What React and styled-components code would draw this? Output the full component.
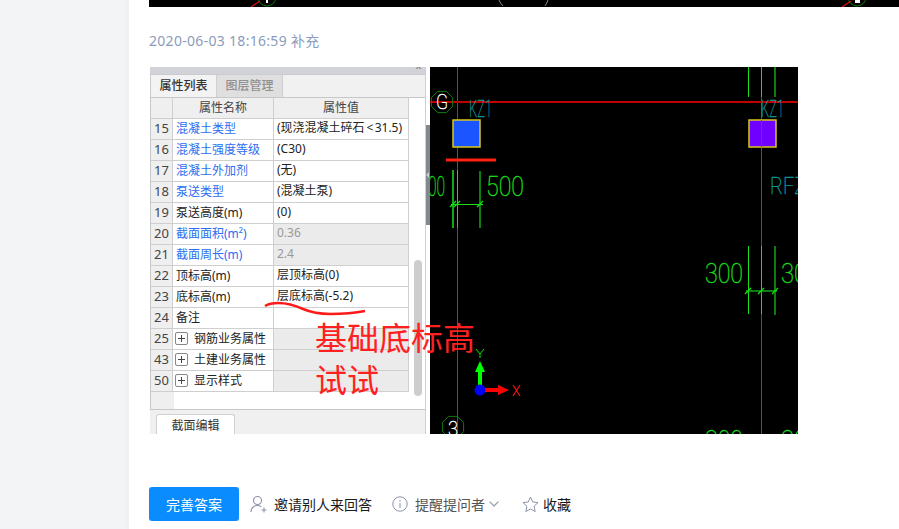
import React from "react";
import styled, { createGlobalStyle } from "styled-components";

const Global = createGlobalStyle`
  html, body { margin: 0; padding: 0; background: #fff; }
  body { font-family: "Noto Sans", "Noto Sans CJK SC", sans-serif; overflow: hidden; }
`;

const Page = styled.div`
  display: flex;
  width: 899px;
  height: 529px;
  overflow: hidden;
`;
const Sidebar = styled.aside`
  width: 129px;
  flex: none;
  background: #f3f4f6;
  box-shadow: inset -4px 0 4px -3px #ebecef;
`;
const Main = styled.main`
  flex: 1;
  min-width: 0;
  padding-left: 20px;
  background: #fff;
  display: flex;
  flex-direction: column;
`;
const TopPicture = styled.svg`
  display: block;
  width: 750px;
  height: 7px;
  flex: none;
`;
const Meta = styled.div`
  margin-top: 26px;
  height: 16px;
  line-height: 16px;
  font-size: 14px;
  letter-spacing: 0.3px;
  color: #8c9bbc;
`;
const Figure = styled.figure`
  position: relative;
  margin: 18px 0 0 1px;
  width: 648px;
  height: 367px;
  display: flex;
  flex: none;
`;
const Panel = styled.div`
  width: 276px;
  height: 367px;
  flex: none;
  background: #f0f0f0;
  box-sizing: border-box;
  border-right: 1px solid #cfd0d3;
  display: flex;
  flex-direction: column;
  font-family: "Noto Sans", "Noto Sans CJK SC", sans-serif;
  font-size: 12px;
  color: #222;
  overflow: hidden;
`;
const TitleBar = styled.div`
  height: 7px;
  flex: none;
  background: #d1d3d8;
  position: relative;
  &::after {
    content: "x";
    position: absolute;
    right: 4px;
    top: -7px;
    font: 10px/12px "Liberation Sans", sans-serif;
    color: #666;
  }
`;
const TabRow = styled.div`
  display: flex;
  height: 23px;
  flex: none;
  box-sizing: border-box;
  border: 1px solid #c9cbce;
  border-right: 0;
  border-bottom: 0;
  background: #f1f1f1;
`;
const Tab = styled.div`
  width: 65px;
  text-align: center;
  line-height: 21px;
  font-weight: 500;
  color: ${p => (p.$active ? "#333" : "#919191")};
  background: ${p => (p.$active ? "#f3f3f3" : "#dfdfdf")};
  border-right: 1px solid #cfcfcf;
`;
const Body = styled.div`
  display: flex;
  height: 313px;
  flex: none;
  background: #fff;
  border: 1px solid #c6c7c9;
  border-right: 0;
  box-sizing: border-box;
`;
const TableWrap = styled.div`
  width: 258px;
  flex: none;
  display: flex;
  flex-direction: column;
`;
const Rows = styled.div`
  display: grid;
  grid-template-columns: 22px 101px 135px;
  grid-auto-rows: 21px;
`;
const Head = styled.div`
  background: #efefef;
  border-right: 1px solid #cfcfcf;
  border-bottom: 1px solid #cfcfcf;
  box-sizing: border-box;
  text-align: center;
  line-height: 20px;
  color: #444;
`;
const Num = styled.div`
  background: #efefef;
  border-right: 1px solid #cfcfcf;
  border-bottom: 1px solid #cfcfcf;
  box-sizing: border-box;
  text-align: center;
  line-height: 19px;
  color: #444;
  font-size: 13px;
`;
const Name = styled.div`
  background: #fff;
  border-right: 1px solid #cfcfcf;
  border-bottom: 1px solid #cfcfcf;
  box-sizing: border-box;
  padding: 0 0 2px 3px;
  white-space: nowrap;
  color: ${p => (p.$link ? "#2d6df0" : "#222")};
  display: flex;
  align-items: center;
`;
const Value = styled.div`
  background: ${p => (p.$off ? "#ebebeb" : "#fff")};
  border-right: 1px solid #cfcfcf;
  border-bottom: 1px solid #cfcfcf;
  box-sizing: border-box;
  line-height: 18px;
  padding-left: 3px;
  white-space: nowrap;
  overflow: hidden;
  color: ${p => (p.$dim ? "#999" : "#222")};
`;
const Filler = styled.div`
  flex: 1;
  margin-right: 235px;
  background: #efefef;
`;
const Expand = styled.span`
  width: 13px;
  height: 13px;
  box-sizing: border-box;
  border: 1px solid #888;
  border-radius: 2px;
  margin: 1px 6px 0 -1px;
  flex: none;
  position: relative;
  &::before, &::after {
    content: "";
    position: absolute;
    background: #444;
  }
  &::before { left: 2px; right: 2px; top: 5px; height: 1px; }
  &::after { top: 2px; bottom: 2px; left: 5px; width: 1px; }
`;
const Scroll = styled.div`
  flex: 1;
  position: relative;
`;
const Thumb = styled.div`
  position: absolute;
  left: 5px;
  top: 162px;
  width: 8px;
  height: 136px;
  border-radius: 4px;
  background: #cdcdcd;
`;
const BottomTabs = styled.div`
  flex: 1;
  padding: 4px 0 0 6px;
  display: flex;
  align-items: flex-end;
`;
const BottomTab = styled.div`
  width: 79px;
  height: 20px;
  box-sizing: border-box;
  background: #fff;
  border: 1px solid #d0d0d0;
  border-bottom: 0;
  border-radius: 3px 3px 0 0;
  text-align: center;
  line-height: 21px;
  color: #333;
`;
const Splitter = styled.div`
  width: 4px;
  flex: none;
  display: flex;
  align-items: flex-start;
  position: relative;
  background: #fff;
  &::before {
    content: "";
    width: 4px;
    height: 100px;
    margin-top: 58px;
    background: #808890;
  }
  &::after {
    content: "";
    position: absolute;
    left: 0;
    top: 105px;
    border: 3px solid transparent;
    border-left: 0;
    border-right: 3px solid #c8cacd;
  }
`;
const Cad = styled.svg`
  display: block;
  width: 368px;
  height: 367px;
  flex: none;
  background: #000;
`;
const Scribble = styled.svg`
  position: absolute;
  left: 0;
  top: 0;
  width: 648px;
  height: 367px;
  pointer-events: none;
`;
const Note = styled.div`
  position: absolute;
  left: 165px;
  top: 248px;
  font-family: "Noto Sans CJK SC", sans-serif;
  font-size: 32px;
  line-height: 42px;
  color: #ff2020;
  white-space: nowrap;
`;
const Actions = styled.div`
  margin-top: 53px;
  height: 34px;
  display: flex;
  align-items: center;
  font-family: "Noto Sans CJK SC", sans-serif;
  font-size: 14px;
`;
const Primary = styled.button`
  width: 90px;
  height: 34px;
  border: 0;
  border-radius: 3px;
  background: #0a8cff;
  color: #fff;
  font: inherit;
  padding: 0;
  margin-right: 11px;
`;
const Action = styled.span`
  display: inline-flex;
  align-items: center;
  gap: ${p => p.$gap}px;
  margin-right: ${p => p.$after}px;
  color: ${p => p.$color || "#1a1a1a"};
  svg { flex: none; }
`;
const ChevronMark = styled.svg`
  margin-left: -3px;
`;

const rows = [
  ["15", "混凝土类型", "(现浇混凝土碎石\u2009<\u200a31.5)", 1],
  ["16", "混凝土强度等级", "(C30)", 1],
  ["17", "混凝土外加剂", "(无)", 1],
  ["18", "泵送类型", "(混凝土泵)", 1],
  ["19", "泵送高度(m)", "(0)", 0],
  ["20", "截面面积(m²)", "0.36", 1, 1],
  ["21", "截面周长(m)", "2.4", 1, 1],
  ["22", "顶标高(m)", "层顶标高(0)", 0],
  ["23", "底标高(m)", "层底标高(-5.2)", 0],
  ["24", "备注", "", 0],
  ["25", "钢筋业务属性", "", 0, 2],
  ["43", "土建业务属性", "", 0, 2],
  ["50", "显示样式", "", 0, 2],
];

const G1 = "#18e018";
const G2 = "#10a810";
const TEAL = "#0c9a9f";
const hex = (cx, cy, r) =>
  Array.from({ length: 8 }, (_, i) => {
    const a = (Math.PI / 4) * i + Math.PI / 8;
    return `${(cx + r * Math.cos(a)).toFixed(1)},${(cy + r * Math.sin(a)).toFixed(1)}`;
  }).join(" ");

const CadText = ({ x, y, w, size, fill, children }) => (
  <text x={x} y={y} textLength={w} lengthAdjust="spacingAndGlyphs" fontFamily="Roboto, sans-serif" fontSize={size} fontWeight="100" fill={fill} stroke={fill} strokeWidth="0.4">
    {children}
  </text>
);

const DimTick = ({ x, y, color }) => (
  <path d={`M${x - 3} ${y + 3}L${x + 3} ${y - 3}`} stroke={color} strokeWidth="1.2" />
);

const CadDrawing = () => (
  <Cad viewBox="430 67 368 367">
    <line x1="457.5" y1="67" x2="457.5" y2="434" stroke="#f01010" />
    <line x1="761.5" y1="97" x2="761.5" y2="434" stroke="#f01010" />
    <line x1="430" y1="102" x2="798" y2="102" stroke="#c00000" strokeWidth="2" />

    <polygon points={hex(442, 102, 11.5)} fill="none" stroke="#0e7a0e" />
    <CadText x="436" y="109" w="12" size="20" fill="#fff">G</CadText>
    <CadText x="469" y="117" w="23" size="23" fill={TEAL}>KZ1</CadText>
    <rect x="453" y="120" width="27" height="27" fill="#1a55ff" stroke="#d8c81a" strokeWidth="1.5" />

    <CadText x="428" y="196" w="17" size="28" fill={G1}>00</CadText>
    <CadText x="486" y="196" w="38" size="28" fill={G1}>500</CadText>
    <line x1="453" y1="170" x2="453" y2="228" stroke={G1} strokeWidth="1.5" />
    <line x1="457.5" y1="170" x2="457.5" y2="228" stroke={G1} />
    <line x1="480" y1="171" x2="480" y2="228" stroke={G2} strokeWidth="1.5" />
    <line x1="451" y1="204.5" x2="483" y2="204.5" stroke={G1} />
    <DimTick x={453} y={204} color={G1} />
    <DimTick x={457} y={204} color={G1} />
    <DimTick x={480} y={204} color={G1} />

    <line x1="748.5" y1="67" x2="748.5" y2="97" stroke={G1} />
    <line x1="761.5" y1="67" x2="761.5" y2="97" stroke={G1} />
    <line x1="775" y1="67" x2="775" y2="97" stroke={G2} strokeWidth="1.5" />
    <CadText x="761" y="117" w="23" size="23" fill={TEAL}>KZ1</CadText>
    <rect x="749" y="120" width="27" height="27" fill="#7000ff" stroke="#d8c81a" strokeWidth="1.5" />
    <line x1="761.5" y1="120" x2="761.5" y2="147" stroke="#f01010" />
    <CadText x="770" y="194" w="36" size="23" fill={TEAL}>RFZ</CadText>

    <CadText x="705" y="283" w="38" size="28" fill={G1}>300</CadText>
    <CadText x="781" y="283" w="26" size="28" fill={G1}>30</CadText>
    <line x1="748.5" y1="246" x2="748.5" y2="314" stroke={G1} />
    <line x1="761.5" y1="246" x2="761.5" y2="314" stroke={G1} />
    <line x1="775" y1="246" x2="775" y2="315" stroke={G2} strokeWidth="1.5" />
    <line x1="746" y1="291" x2="777" y2="291" stroke={G2} strokeWidth="1.5" />
    <DimTick x={748} y={291} color={G1} />
    <DimTick x={761} y={291} color={G1} />
    <DimTick x={775} y={291} color={G1} />

    <line x1="480" y1="390" x2="480" y2="370" stroke="#00ff00" strokeWidth="4" />
    <polygon points="480,361 485,372 475,372" fill="#00ff00" />
    <path d="M476 349L480 354L484 349M480 354V358" fill="none" stroke="#00e000" />
    <line x1="480" y1="390" x2="500" y2="390" stroke="#ff0000" strokeWidth="4" />
    <polygon points="509,390 498,385 498,395" fill="#ff0000" />
    <path d="M513 385L520 396M520 385L513 396" fill="none" stroke="#ff1010" strokeWidth="1.2" />
    <circle cx="480" cy="390" r="5.5" fill="#0000ff" />

    <polygon points={hex(453, 427, 11.5)} fill="none" stroke="#0e7a0e" />
    <CadText x="448" y="436" w="10" size="20" fill="#fff">3</CadText>
    <CadText x="705" y="450" w="38" size="28" fill={G1}>300</CadText>
    <CadText x="781" y="450" w="26" size="28" fill={G1}>30</CadText>
  </Cad>
);

const TopDrawing = () => (
  <TopPicture viewBox="149 0 750 7">
    <rect x="149" y="0" width="750" height="7" fill="#000" />
    <line x1="251" y1="7" x2="260" y2="1" stroke="#d01010" strokeWidth="1.4" />
    <circle cx="267" cy="-3" r="9" fill="none" stroke="#0e7a0e" />
    <rect x="266" y="0" width="2" height="3" fill="#fff" />
    <path d="M499 0Q500 3 503 6M548 0Q547 3 545 6" fill="none" stroke="#888" />
    <line x1="842" y1="7" x2="851" y2="1" stroke="#d01010" strokeWidth="1.4" />
    <circle cx="857" cy="-3" r="9" fill="none" stroke="#0e7a0e" />
    <rect x="855" y="0" width="5" height="3" fill="#fff" />
  </TopPicture>
);

const UserIcon = () => (
  <svg width="17" height="18" viewBox="0 0 17 18" fill="none" stroke="#8b93a7" strokeWidth="1.1">
    <circle cx="7.5" cy="5.5" r="4" />
    <path d="M1 17c0-4 3-6.5 6.5-6.5 1.5 0 2.8.4 3.8 1.2" />
    <path d="M11.5 15h5M14 12.5v5" />
  </svg>
);
const InfoIcon = () => (
  <svg width="16" height="16" viewBox="0 0 16 16" fill="none" stroke="#8b93a7" strokeWidth="1">
    <circle cx="8" cy="8" r="7.2" />
    <path d="M8 7v5M8 4v1.4" />
  </svg>
);
const Chevron = () => (
  <ChevronMark width="10" height="6" viewBox="0 0 10 6" fill="none" stroke="#9aa0ad" strokeWidth="1.3">
    <path d="M.6.6L5 5l4.4-4.4" />
  </ChevronMark>
);
const StarIcon = () => (
  <svg width="17" height="17" viewBox="0 0 17 17" fill="none" stroke="#8b93a7" strokeWidth="1">
    <path d="M8.5 1l2.3 5 5.2.6-3.9 3.6 1.1 5.4-4.7-2.7-4.7 2.7 1.1-5.4L1 6.6 6.2 6z" />
  </svg>
);

export default function App() {
  return (
    <Page>
      <Global />
      <Sidebar />
      <Main>
        <TopDrawing />
        <Meta>2020-06-03 18:16:59 补充</Meta>
        <Figure>
          <Panel>
            <TitleBar />
            <TabRow>
              <Tab $active>属性列表</Tab>
              <Tab>图层管理</Tab>
            </TabRow>
            <Body>
              <TableWrap>
                <Rows>
                  <Head />
                  <Head>属性名称</Head>
                  <Head>属性值</Head>
                  {rows.map(([n, name, value, link, kind]) => (
                    <React.Fragment key={n}>
                      <Num>{n}</Num>
                      <Name $link={!!link}>
                        {kind === 2 && <Expand />}
                        {name}
                      </Name>
                      <Value $off={kind === 1 || kind === 2} $dim={kind === 1}>{value}</Value>
                    </React.Fragment>
                  ))}
                </Rows>
                <Filler />
              </TableWrap>
              <Scroll>
                <Thumb />
              </Scroll>
            </Body>
            <BottomTabs>
              <BottomTab>截面编辑</BottomTab>
            </BottomTabs>
          </Panel>
          <Splitter />
          <CadDrawing />
          <Scribble viewBox="150 67 648 367">
            <path d="M265 306Q270 303 278 303Q290 303 303 309Q315 314 330 314Q350 314 365 311" fill="none" stroke="#ff1a1a" strokeWidth="2.5" />
            <line x1="446" y1="160" x2="496" y2="160" stroke="#ff2010" strokeWidth="3" />
          </Scribble>
          <Note>基础底标高<br />试试</Note>
        </Figure>
        <Actions>
          <Primary>完善答案</Primary>
          <Action $gap={7} $after={20}><UserIcon />邀请别人来回答</Action>
          <Action $gap={7} $after={23} $color="#555"><InfoIcon />提醒提问者<Chevron /></Action>
          <Action $gap={4} $after={0}><StarIcon />收藏</Action>
        </Actions>
      </Main>
    </Page>
  );
}
